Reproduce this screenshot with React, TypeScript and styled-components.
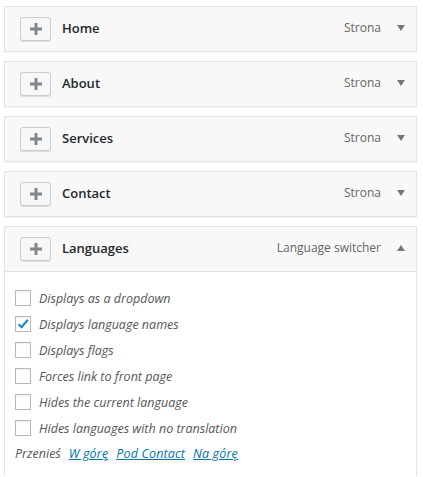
import React from "react";
import styled, { createGlobalStyle } from "styled-components";

const GlobalStyle = createGlobalStyle`
  body {
    margin: 0;
    background: #fff;
    font-family: "Open Sans", "Noto Sans", sans-serif;
    font-size: 13px;
    color: #23282d;
  }
`;

const MainDiv = styled.div`
  padding: 6px 6px 0 4px;
  display: flex;
  flex-direction: column;
  gap: 9px;
`;

const Item = styled.div<{ $open?: boolean }>`
  border: 1px solid #e2e4e7;
  border-bottom: ${(p) => (p.$open ? "none" : "1px solid #e2e4e7")};
  background: #fff;
  box-shadow: 0 1px 1px rgba(0, 0, 0, 0.04);
`;

const Bar = styled.div<{ $open?: boolean }>`
  display: flex;
  align-items: center;
  height: 44px;
  padding: 0 11px 0 15px;
  background: #f8f8f8;
  border-bottom: ${(p) => (p.$open ? "1px solid #e2e4e7" : "none")};
`;

const PlusButton = styled.span`
  width: 29px;
  height: 22px;
  border: 1px solid #ccc;
  border-radius: 3px;
  background: #f7f7f7;
  box-shadow: 0 1px 0 #ddd;
  display: flex;
  align-items: center;
  justify-content: center;
  margin-right: 11px;
`;

const Title = styled.span`
  font-weight: 600;
  font-size: 13px;
  flex: 1;
  color: #23282d;
  margin-bottom: 3px;
`;

const TypeLabel = styled.span`
  color: #666;
  font-size: 12px;
  margin-right: 16px;
  margin-bottom: 3px;
`;

const Arrow = styled.span<{ $up?: boolean }>`
  width: 0;
  height: 0;
  margin-bottom: 3px;
  border-left: 4px solid transparent;
  border-right: 4px solid transparent;
  ${(p) =>
    p.$up ? "border-bottom: 6px solid #72777c;" : "border-top: 6px solid #72777c;"}
`;

const Body = styled.div`
  padding: 13px 10px 14px 10px;
  display: flex;
  flex-direction: column;
`;

const OptionRow = styled.label`
  display: flex;
  align-items: center;
  height: 26px;
  font-style: italic;
  font-size: 12.5px;
  color: #555;
`;

const Box = styled.span`
  width: 14px;
  height: 14px;
  border: 1px solid #b4b9be;
  background: #fff;
  box-shadow: inset 0 1px 2px rgba(0, 0, 0, 0.07);
  margin-right: 8px;
  display: flex;
  align-items: center;
  justify-content: center;
`;

const MoveRow = styled.div`
  display: flex;
  gap: 8px;
  margin-top: 4px;
  font-style: italic;
  font-size: 12.5px;
  color: #555;
`;

const MoveLink = styled.a`
  color: #0073aa;
  text-decoration: underline;
  letter-spacing: 0.15px;
`;

const Plus = () => (
  <svg width="12" height="12" viewBox="0 0 12 12">
    <rect x="4.5" y="0" width="3" height="12" fill="#82878c" />
    <rect x="0" y="4.5" width="12" height="3" fill="#82878c" />
  </svg>
);

const Check = () => (
  <svg width="14" height="14" viewBox="0 0 14 14">
    <path d="M2.5 7.2 L5.6 10.2 L11.8 2.8" stroke="#1e8cbe" strokeWidth="2.2" fill="none" />
  </svg>
);

const items = ["Home", "About", "Services", "Contact"];

const options = [
  { label: "Displays as a dropdown", checked: false },
  { label: "Displays language names", checked: true },
  { label: "Displays flags", checked: false },
  { label: "Forces link to front page", checked: false },
  { label: "Hides the current language", checked: false },
  { label: "Hides languages with no translation", checked: false },
];

const App: React.FC = () => {
  return (
    <MainDiv>
      <GlobalStyle />
      {items.map((name) => (
        <Item key={name}>
          <Bar>
            <PlusButton>
              <Plus />
            </PlusButton>
            <Title>{name}</Title>
            <TypeLabel>Strona</TypeLabel>
            <Arrow />
          </Bar>
        </Item>
      ))}
      <Item $open>
        <Bar $open>
          <PlusButton>
            <Plus />
          </PlusButton>
          <Title>Languages</Title>
          <TypeLabel>Language switcher</TypeLabel>
          <Arrow $up />
        </Bar>
        <Body>
          {options.map((o) => (
            <OptionRow key={o.label}>
              <Box>{o.checked && <Check />}</Box>
              {o.label}
            </OptionRow>
          ))}
          <MoveRow>
            <span>Przenieś</span>
            <MoveLink href="#">W górę</MoveLink>
            <MoveLink href="#">Pod Contact</MoveLink>
            <MoveLink href="#">Na górę</MoveLink>
          </MoveRow>
        </Body>
      </Item>
    </MainDiv>
  );
};

export default App;
